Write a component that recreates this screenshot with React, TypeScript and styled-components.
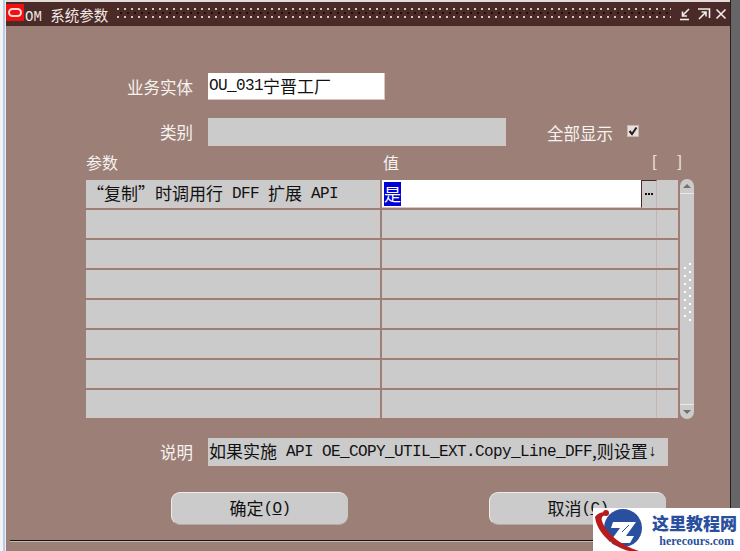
import React from "react";
import styled, { createGlobalStyle } from "styled-components";

const GlobalStyle = createGlobalStyle`
    html, body {
        margin: 0;
        padding: 0;
        background: #666666;
    }
`;

const Screen = styled.div`
    position: relative;
    display: flex;
    width: 740px;
    height: 551px;
    overflow: hidden;
    font-family: "Liberation Mono", "Noto Sans CJK SC", monospace;
    font-size: 16px;
    letter-spacing: -0.6px;
    color: #111111;
`;

const LeftStrip = styled.div`
    width: 6px;
    background: linear-gradient(to right, #f4f4f4 0 3px, #b9cde6 3px 5px, #e8eef6 5px);
`;

const RightStrip = styled.div`
    flex: 1;
    background: #666666;
    border-left: 1px solid #222222;
`;

const Window = styled.div`
    display: flex;
    flex-direction: column;
    width: 724px;
    height: 551px;
    background: #9c7f77;
    border-top: 2px solid #e4dcda;
    box-sizing: border-box;
`;

const TitleBar = styled.div`
    display: flex;
    align-items: center;
    height: 24px;
    flex-shrink: 0;
    padding-right: 3px;
    background: #4a2b27;
    color: #f0e8e4;
`;

const OracleBadge = styled.div`
    display: flex;
    align-items: center;
    justify-content: center;
    width: 18px;
    height: 17px;
    margin-top: -4px;
    background: #ee1111;
`;

const OracleRing = styled.div`
    width: 10px;
    height: 5px;
    border: 2px solid #ffd8d8;
    border-radius: 5px;
`;

const TitleText = styled.div`
    margin-left: 1px;
    font-size: 14px;
    letter-spacing: 0;
    white-space: pre;
`;

const TitleCjk = styled.span`
    font-size: 14.5px;
`;

const Grip = styled.div`
    flex: 1;
    height: 12px;
    margin: 0 8px 0 9px;
    background-image:
        radial-gradient(circle at 1px 1px, #d8c4bc 0.8px, transparent 1px),
        radial-gradient(circle at 1px 1px, #1e0e0c 0.8px, transparent 1px);
    background-size: 7px 8px, 7px 8px;
    background-position: 0 0, 3px 4px;
`;

const WindowIcons = styled.div`
    display: flex;
    gap: 4px;
    align-items: center;
`;

const Form = styled.div`
    display: flex;
    flex-direction: column;
    padding-top: 47px;
`;

const FieldRow = styled.div<{ $top?: number }>`
    display: flex;
    align-items: center;
    margin-top: ${(p) => p.$top ?? 0}px;
`;

const Label = styled.div`
    width: 187px;
    margin-right: 15px;
    text-align: right;
    font-size: 16.5px;
    letter-spacing: 0;
    color: #f6f2f0;
    white-space: nowrap;
`;

const Field = styled.div<{ $w: number; $h: number; $white?: boolean }>`
    box-sizing: border-box;
    display: flex;
    align-items: center;
    width: ${(p) => p.$w}px;
    height: ${(p) => p.$h}px;
    padding-left: 1px;
    background: ${(p) => (p.$white ? "#ffffff" : "#cbcbcb")};
    border-bottom: 1px solid #d9c6c1;
    border-right: 1px solid #d9c6c1;
    white-space: pre;
    overflow: hidden;
`;

const Cjk = styled.span`
    position: relative;
    top: -1px;
    font-family: "Noto Sans CJK SC", sans-serif;
    font-size: 17px;
    letter-spacing: 0;
`;

const ShowAll = styled.div`
    display: flex;
    align-items: center;
    margin: 2px 0 0 41px;
    font-size: 16.5px;
    letter-spacing: 0;
    color: #f6f2f0;
`;

const CheckBox = styled.div`
    display: flex;
    align-items: center;
    justify-content: center;
    box-sizing: border-box;
    width: 12px;
    height: 12px;
    margin: -4px 0 0 14px;
    background: #e4e0de;
    border: 1px solid #c9b8b2;
`;

const HeaderRow = styled.div`
    display: flex;
    align-items: center;
    height: 20px;
    margin: 6px 0 8px 80px;
    font-size: 16px;
    letter-spacing: 0;
    color: #f6f2f0;
`;

const ParamHead = styled.div`
    width: 297px;
`;

const ValueHead = styled.div`
    width: 269px;
`;

const Brackets = styled.div`
    display: flex;
    justify-content: space-between;
    width: 30px;
    font-family: "Liberation Sans", sans-serif;
    font-size: 17px;
    color: #e6dcd8;
`;

const Grid = styled.div`
    display: flex;
    margin-left: 80px;
`;

const Rows = styled.div`
    display: flex;
    flex-direction: column;
    gap: 2px;
    width: 592px;
`;

const Row = styled.div`
    display: flex;
    height: 28px;
`;

const ParamCell = styled.div`
    box-sizing: border-box;
    display: flex;
    align-items: center;
    width: 294px;
    margin-right: 2px;
    padding-left: 1px;
    background: #cbcbcb;
    border-bottom: 1px solid #d9c6c1;
    border-right: 1px solid #d9c6c1;
    white-space: pre;
`;

const ValueCell = styled.div<{ $active?: boolean }>`
    box-sizing: border-box;
    display: flex;
    align-items: center;
    width: ${(p) => (p.$active ? 260 : 275)}px;
    background: ${(p) => (p.$active ? "#ffffff" : "#cbcbcb")};
    border-bottom: 1px solid #d9c6c1;
    border-right: 1px solid ${(p) => (p.$active ? "#4a2b27" : "#c4b4b0")};
`;

const Selected = styled.span`
    margin-left: 2px;
    font-family: "Noto Sans CJK SC", sans-serif;
    font-size: 17px;
    letter-spacing: 0;
    line-height: 24px;
    background: #0000d8;
    color: #ffffff;
`;

const LovButton = styled.div`
    box-sizing: border-box;
    display: flex;
    justify-content: center;
    align-items: center;
    gap: 1px;
    width: 15px;
    background: #cbcbcb;
    border-top: 1px solid #4a2b27;
    border-bottom: 1px solid #d9c6c1;
    border-right: 1px solid #c4b4b0;
`;

const LovDot = styled.div`
    width: 2px;
    height: 2px;
    background: #1a0c0a;
`;

const ExtraCell = styled.div`
    box-sizing: border-box;
    width: 21px;
    background: #cbcbcb;
    border-bottom: 1px solid #d9c6c1;
    border-right: 1px solid #d9c6c1;
`;

const ScrollBar = styled.div`
    display: flex;
    flex-direction: column;
    width: 14px;
    height: 240px;
    margin: -1px 0 0 2px;
    background: #cbcbcb;
    border-radius: 7px;
    overflow: hidden;
`;

const ScrollEnd = styled.div<{ $down?: boolean }>`
    display: flex;
    align-items: center;
    justify-content: center;
    box-sizing: border-box;
    height: 15px;
    ${(p) => (p.$down ? "border-top: 1px solid #efe8e6;" : "border-bottom: 1px solid #efe8e6;")}
`;

const Arrow = styled.div<{ $down?: boolean }>`
    width: 0;
    height: 0;
    border-left: 4px solid transparent;
    border-right: 4px solid transparent;
    ${(p) => (p.$down ? "border-top: 4px solid #77706e;" : "border-bottom: 4px solid #77706e;")}
`;

const Track = styled.div`
    flex: 1;
`;

const Dots = styled.div`
    width: 7px;
    height: 58px;
    margin: 69px 0 0 4px;
    background-image:
        radial-gradient(circle at 1px 1px, #ffffff 1px, transparent 1.2px),
        radial-gradient(circle at 1px 1px, #ffffff 1px, transparent 1.2px);
    background-size: 10px 8px, 10px 8px;
    background-position: 0 4px, 5px 0;
`;

const DescRow = styled(FieldRow)`
    margin-top: 19px;
`;

const Buttons = styled.div`
    display: flex;
    margin: 26px 0 0 165px;
    gap: 141px;
`;

const Button = styled.div`
    box-sizing: border-box;
    display: flex;
    align-items: center;
    justify-content: center;
    width: 177px;
    height: 33px;
    background: #cbcbcb;
    border-radius: 9px;
    border-top: 1px solid #f0ebe9;
    border-left: 1px solid #f0ebe9;
    border-bottom: 1px solid #b8a8a3;
    white-space: pre;
`;

const Underlined = styled.span`
    text-decoration: underline;
`;

const BottomRule = styled.div`
    height: 1px;
    margin: 15px 0 0 4px;
    background: #111111;
    box-shadow: 0 1px 0 #c8b8b2;
`;

const Watermark = styled.div`
    position: absolute;
    right: 0;
    bottom: 0;
    display: flex;
    align-items: center;
    width: 147px;
    height: 43px;
    background: #ffffff;
`;

const MarkText = styled.div`
    display: flex;
    flex-direction: column;
    align-items: flex-end;
    width: 87px;
    margin-left: -3px;
    font-family: "Liberation Serif", "Noto Sans CJK SC", serif;
    font-weight: bold;
    letter-spacing: 0;
    color: #2a4f9e;
`;

const MarkTitle = styled.div`
    font-family: "Noto Sans CJK SC", serif;
    font-size: 17px;
    line-height: 22px;
    font-weight: 900;
`;

const MarkUrl = styled.div`
    font-size: 12px;
    line-height: 14px;
    margin-right: 3px;
`;

function Restore() {
    return (
        <svg width="14" height="14" viewBox="0 0 14 14" fill="none" stroke="#f4ecea" strokeWidth="1.6">
            <path d="M1 12.5H10" />
            <path d="M10 2L3.5 8.5M3.5 4.5V9H8" />
        </svg>
    );
}

function Maximize() {
    return (
        <svg width="14" height="14" viewBox="0 0 14 14" fill="none" stroke="#f4ecea" strokeWidth="1.6">
            <path d="M1 2H12.5V11" />
            <path d="M2 12L8.5 5.5M4.5 5H9V9.5" />
        </svg>
    );
}

function CloseIcon() {
    return (
        <svg width="12" height="12" viewBox="0 0 12 12" fill="none" stroke="#f4ecea" strokeWidth="1.6">
            <path d="M1.5 1.5L10.5 10.5M10.5 1.5L1.5 10.5" />
        </svg>
    );
}

function Logo() {
    return (
        <svg width="60" height="43" viewBox="0 0 60 43">
            <circle cx="30" cy="20" r="19" fill="#2a4f9e" />
            <path d="M20 14H43L33 28H41L37 35H16L27 20H18Z" fill="#ffffff" />
            <path d="M29 24L36 17" stroke="#2a4f9e" strokeWidth="1" />
            <path d="M2 9C3 7 7 4 12 4L12 7C9 8 8 10 9 13C13 25 27 37 46 43H36C20 39 4 25 2 9Z" fill="#b81c1c" />
            <circle cx="13" cy="5" r="3" fill="#b81c1c" />
        </svg>
    );
}

const emptyRows = [1, 2, 3, 4, 5, 6, 7];

function App() {
    return (
        <Screen>
            <GlobalStyle />
            <LeftStrip />
            <Window>
                <TitleBar>
                    <OracleBadge>
                        <OracleRing />
                    </OracleBadge>
                    <TitleText>
                        OM <TitleCjk>系统参数</TitleCjk>
                    </TitleText>
                    <Grip />
                    <WindowIcons>
                        <Restore />
                        <Maximize />
                        <CloseIcon />
                    </WindowIcons>
                </TitleBar>
                <Form>
                    <FieldRow>
                        <Label>业务实体</Label>
                        <Field $w={177} $h={27} $white>
                            OU_031<Cjk>宁晋工厂</Cjk>
                        </Field>
                    </FieldRow>
                    <FieldRow $top={18}>
                        <Label>类别</Label>
                        <Field $w={298} $h={28} />
                        <ShowAll>
                            全部显示
                            <CheckBox>
                                <svg width="10" height="10" viewBox="0 0 10 10" fill="none" stroke="#2a1a18" strokeWidth="2">
                                    <path d="M1.5 5L4 8L8.5 1.5" />
                                </svg>
                            </CheckBox>
                        </ShowAll>
                    </FieldRow>
                    <HeaderRow>
                        <ParamHead>参数</ParamHead>
                        <ValueHead>值</ValueHead>
                        <Brackets>
                            <span>[</span>
                            <span>]</span>
                        </Brackets>
                    </HeaderRow>
                    <Grid>
                        <Rows>
                            <Row>
                                <ParamCell>
                                    <Cjk>“复制”时调用行</Cjk> DFF <Cjk>扩展</Cjk> API
                                </ParamCell>
                                <ValueCell $active>
                                    <Selected>是</Selected>
                                </ValueCell>
                                <LovButton>
                                    <LovDot />
                                    <LovDot />
                                    <LovDot />
                                </LovButton>
                                <ExtraCell />
                            </Row>
                            {emptyRows.map((n) => (
                                <Row key={n}>
                                    <ParamCell />
                                    <ValueCell />
                                    <ExtraCell />
                                </Row>
                            ))}
                        </Rows>
                        <ScrollBar>
                            <ScrollEnd>
                                <Arrow />
                            </ScrollEnd>
                            <Track>
                                <Dots />
                            </Track>
                            <ScrollEnd $down>
                                <Arrow $down />
                            </ScrollEnd>
                        </ScrollBar>
                    </Grid>
                    <DescRow>
                        <Label>说明</Label>
                        <Field $w={460} $h={28}>
                            <Cjk>如果实施</Cjk> API OE_COPY_UTIL_EXT.Copy_Line_DFF<Cjk>,则设置</Cjk>↓
                        </Field>
                    </DescRow>
                    <Buttons>
                        <Button>
                            <Cjk>确定</Cjk>(<Underlined>O</Underlined>)
                        </Button>
                        <Button>
                            <Cjk>取消</Cjk>(<Underlined>C</Underlined>)
                        </Button>
                    </Buttons>
                    <BottomRule />
                </Form>
            </Window>
            <RightStrip />
            <Watermark>
                <Logo />
                <MarkText>
                    <MarkTitle>这里教程网</MarkTitle>
                    <MarkUrl>herecours.com</MarkUrl>
                </MarkText>
            </Watermark>
        </Screen>
    );
}

export default App;
